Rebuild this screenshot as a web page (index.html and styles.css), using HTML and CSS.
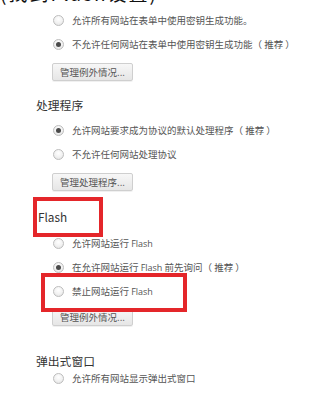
FILE: index.html
```html
<!DOCTYPE html>
<html lang="zh">
<head>
<meta charset="utf-8">
<link rel="stylesheet" href="styles.css">
</head>
<body>
<div class="page">
  <div class="cut"><div class="cut-text">(找到Flash设置)</div></div>

  <div class="opts first">
    <div class="opt"><span class="radio"></span><span>允许所有网站在表单中使用密钥生成功能。</span></div>
    <div class="opt"><span class="radio on"></span><span>不允许任何网站在表单中使用密钥生成功能（ 推荐 ）</span></div>
    <button class="btn">管理例外情况...</button>
  </div>

  <h3 class="head h-handler">处理程序</h3>
  <div class="opts">
    <div class="opt"><span class="radio on"></span><span>允许网站要求成为协议的默认处理程序（ 推荐 ）</span></div>
    <div class="opt"><span class="radio"></span><span>不允许任何网站处理协议</span></div>
    <button class="btn">管理处理程序...</button>
  </div>

  <h3 class="head h-flash">Flash</h3>
  <div class="opts">
    <div class="opt"><span class="radio"></span><span>允许网站运行 <span class="lat">Flash</span></span></div>
    <div class="opt"><span class="radio on"></span><span>在允许网站运行 <span class="lat">Flash</span> 前先询问（ 推荐 ）</span></div>
    <div class="opt"><span class="radio"></span><span>禁止网站运行 <span class="lat">Flash</span></span></div>
    <button class="btn btn-flash">管理例外情况...</button>
  </div>

  <h3 class="head h-popup">弹出式窗口</h3>
  <div class="opts popup">
    <div class="opt"><span class="radio"></span><span>允许所有网站显示弹出式窗口</span></div>
  </div>

  <div class="mark mark-1"></div>
  <div class="mark mark-2"></div>
</div>
</body>
</html>
```
FILE: styles.css
```css
* { box-sizing: border-box; }
html, body { margin: 0; padding: 0; background: #fff; }
body {
  font-family: "Noto Sans CJK SC", "Noto Sans", sans-serif;
  color: #555;
  width: 332px;
  height: 406px;
  overflow: hidden;
}
.page { position: relative; width: 332px; height: 406px; }

.cut { height: 6px; overflow: hidden; }
.cut-text {
  margin-top: -19px;
  font-size: 19px;
  line-height: 23px;
  color: #111;
  white-space: nowrap;
  letter-spacing: 2px;
}

.opts {
  display: flex;
  flex-direction: column;
  align-items: flex-start;
  padding-left: 53px;
}
.opts.first { margin-top: 2px; }

.opt {
  display: flex;
  align-items: center;
  gap: 8px;
  height: 24px;
  font-size: 9.5px;
  color: #555;
  white-space: nowrap;
}
.lat { font-family: "Open Sans", "Noto Sans", sans-serif; font-size: 9px; }

.radio {
  width: 11px;
  height: 11px;
  border-radius: 50%;
  border: 1px solid #bdbdbd;
  background: radial-gradient(circle at 50% 35%, #ffffff 0%, #f1f1f1 55%, #dcdcdc 100%);
  display: flex;
  align-items: center;
  justify-content: center;
  flex: none;
}
.radio.on::after {
  content: "";
  width: 5px;
  height: 5px;
  border-radius: 50%;
  background: #4a4a4a;
}

.btn {
  margin-top: 7px;
  margin-left: -1px;
  width: 81px;
  height: 18px;
  padding: 0;
  font-family: "Noto Sans CJK SC", "Noto Sans", sans-serif;
  font-size: 9.5px;
  color: #555;
  border: 1px solid #cfcfcf;
  border-radius: 2px;
  background: linear-gradient(#f7f7f7, #e6e6e6);
  box-shadow: 0 1px 0 rgba(0,0,0,0.06);
  line-height: 16px;
}
.btn-flash { margin-top: 5px; }

.head {
  margin: 0;
  padding-left: 36px;
  font-size: 11.8px;
  font-weight: normal;
  line-height: 16px;
  color: #333;
}
.h-handler { margin-top: 16px; margin-bottom: 5px; }
.h-flash { margin-top: 18px; margin-bottom: 6px; padding-left: 38px; }
.h-popup { margin-top: 27px; margin-bottom: -3px; }

.mark {
  position: absolute;
  border: 4px solid #e4262a;
}
.mark-1 { left: 33px; top: 197px; width: 70px; height: 40px; }
.mark-2 { left: 41px; top: 273px; width: 146px; height: 39px; }
```
